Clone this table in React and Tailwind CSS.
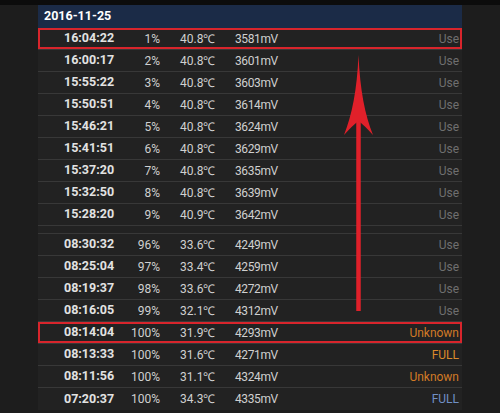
const rows1 = [
  ['16:04:22', '1%', '40.8℃', '3581mV', 'Use'],
  ['16:00:17', '2%', '40.8℃', '3601mV', 'Use'],
  ['15:55:22', '3%', '40.8℃', '3603mV', 'Use'],
  ['15:50:51', '4%', '40.8℃', '3614mV', 'Use'],
  ['15:46:21', '5%', '40.8℃', '3624mV', 'Use'],
  ['15:41:51', '6%', '40.8℃', '3629mV', 'Use'],
  ['15:37:20', '7%', '40.8℃', '3635mV', 'Use'],
  ['15:32:50', '8%', '40.8℃', '3639mV', 'Use'],
  ['15:28:20', '9%', '40.9℃', '3642mV', 'Use'],
];

const rows2 = [
  ['08:30:32', '96%', '33.6℃', '4249mV', 'Use'],
  ['08:25:04', '97%', '33.4℃', '4259mV', 'Use'],
  ['08:19:37', '98%', '33.6℃', '4272mV', 'Use'],
  ['08:16:05', '99%', '32.1℃', '4312mV', 'Use'],
  ['08:14:04', '100%', '31.9℃', '4293mV', 'Unknown'],
  ['08:13:33', '100%', '31.6℃', '4271mV', 'FULL'],
  ['08:11:56', '100%', '31.1℃', '4324mV', 'Unknown'],
  ['07:20:37', '100%', '34.3℃', '4335mV', 'FULL2'],
];

const statusClass = {
  Use: 'text-[#6f6f6f]',
  Unknown: 'text-[#d27a26]',
  FULL: 'text-[#db8a2b]',
  FULL2: 'text-[#7090c6]',
};

function Row({ r, boxed, last }) {
  const [time, pct, temp, mv, status] = r;
  return (
    <div className={`relative flex h-[22px] items-center ${last ? '' : 'border-b border-[#383838]'}`}>
      <div className="w-[74px] pl-[26px] text-[12.5px] font-bold text-[#e2e2e2]">{time}</div>
      <div className="w-[48px] text-right text-[#d0d0d0]">{pct}</div>
      <div className="w-[75px] pl-[20px] text-[#d0d0d0]">{temp}</div>
      <div className="tracking-[-0.4px] text-[#d0d0d0]">{mv}</div>
      <div className={`flex-1 pr-[3px] text-right ${statusClass[status]}`}>
        {status === 'FULL2' ? 'FULL' : status}
      </div>
      {boxed && <div className="absolute inset-0 border-2 border-[#d8252c]" />}
    </div>
  );
}

export default function App() {
  return (
    <div className="relative h-[413px] w-[500px] overflow-hidden bg-[#1d1d1d] font-['Roboto',sans-serif] text-[12px]">
      <div className="h-[5px] bg-[#0c0c0c]" />
      <div className="ml-[38px] w-[424px] bg-[#222222]">
        <div className="flex h-[23px] items-center bg-[#1b2b47] px-[6px] text-[12.5px] font-bold text-white">2016-11-25</div>
        {rows1.map((r, i) => (
          <Row key={r[0]} r={r} boxed={i === 0} />
        ))}
        <div className="h-[8px] border-b border-[#383838]" />
        {rows2.map((r, i) => (
          <Row key={r[0]} r={r} boxed={r[0] === '08:14:04'} last={i === rows2.length - 1} />
        ))}
      </div>
      <svg className="absolute left-0 top-0" width="500" height="413" viewBox="0 0 500 413">
        <line x1="358.5" y1="118" x2="358.5" y2="311" stroke="#e0202a" strokeWidth="4.5" />
        <path
          d="M358.5,55 C360,90 365,115 373,135 Q364,125 358.5,121 Q353,125 344,135 C352,115 357,90 358.5,55 Z"
          fill="#e0202a"
        />
      </svg>
    </div>
  );
}
